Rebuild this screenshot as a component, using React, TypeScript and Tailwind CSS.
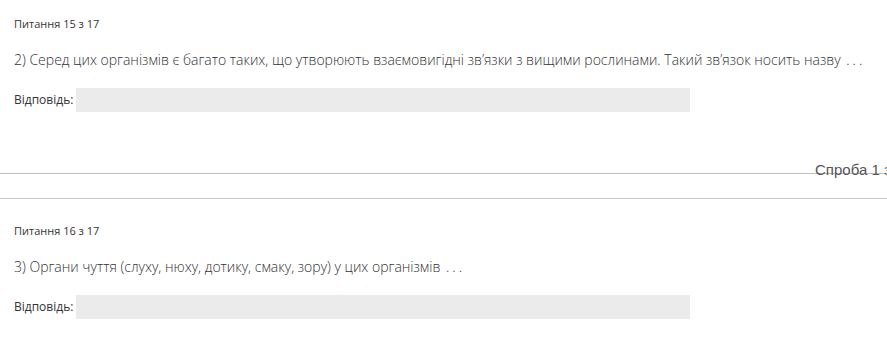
const questions = [
  {
    label: "Питання 15 з 17",
    text: "2) Серед цих організмів є багато таких, що утворюють взаємовигідні зв’язки з вищими рослинами. Такий зв’язок носить назву",
  },
  {
    label: "Питання 16 з 17",
    text: "3) Органи чуття (слуху, нюху, дотику, смаку, зору) у цих організмів",
  },
];

const Question = ({ label, text }: { label: string; text: string }) => (
  <div className="px-[14px]">
    <p className="text-[11px] leading-[16px] font-medium text-[#333]">{label}</p>
    <p className="mt-[18px] text-[14px] leading-[20px] text-[#333] whitespace-nowrap font-['Open_Sans',sans-serif] font-light">
      {text} <span className="ml-[2px] tracking-[3px]">...</span>
    </p>
    <div className="mt-[18px] flex items-center gap-[3px]">
      <span className="text-[12px] text-[#333]">Відповідь:</span>
      <div className="h-[24px] w-[614px] bg-[#ebebeb]" />
    </div>
  </div>
);

export default function App() {
  return (
    <div className="w-[887px] h-[341px] overflow-hidden bg-white font-['Open_Sans',sans-serif]">
      <div className="pt-[16px]">
        <Question {...questions[0]} />
      </div>
      <div className="relative mt-[61px] border-t border-[#bdbdbd]">
        <span className="absolute left-[815px] top-[-14px] whitespace-nowrap text-[15px] leading-[20px] text-[#555] font-['Liberation_Sans_Narrow','Liberation_Sans',sans-serif]">
          Спроба 1 з 1
        </span>
      </div>
      <div className="mt-[24px] border-t border-[#c8c8c8]" />
      <div className="pt-[24px]">
        <Question {...questions[1]} />
      </div>
    </div>
  );
}
